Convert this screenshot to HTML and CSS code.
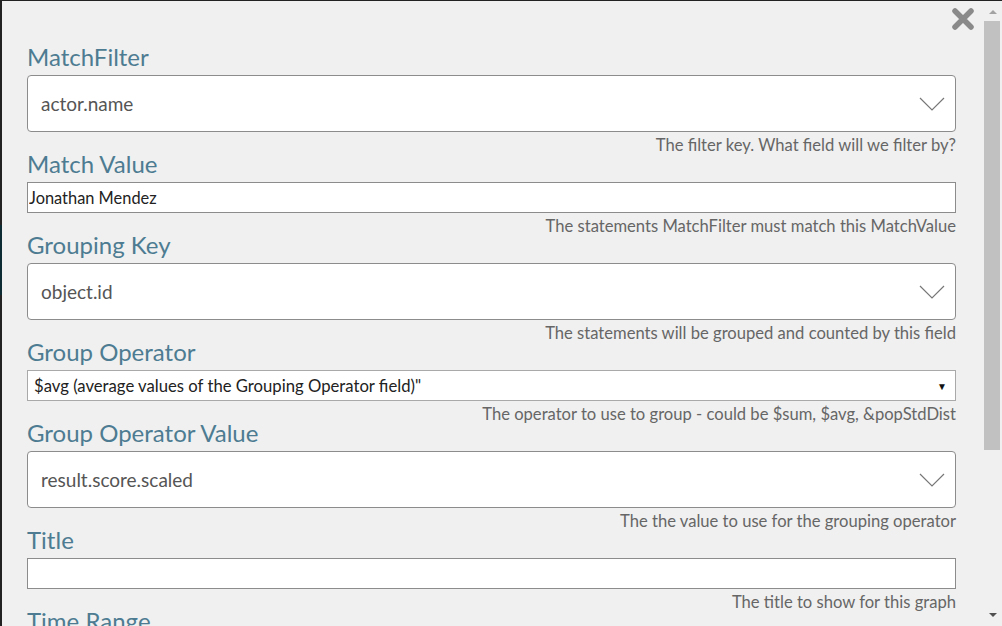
FILE: index.html
```html
<!DOCTYPE html>
<html lang="en">
<head>
    <meta charset="UTF-8" />
    <title>Graph settings</title>
    <link rel="stylesheet" href="styles.css">
</head>
<body>

    <div class="dialog">
        <div class="dialog-body">
            <button class="close-btn" title="Close">
                <svg width="22" height="22" viewBox="0 0 22 22">
                    <path d="M3 3 L19 19 M19 3 L3 19" stroke="#8a8a8a" stroke-width="5.5" stroke-linecap="round" />
                </svg>
            </button>

            <div class="field">
                <label>MatchFilter</label>
                <div class="combo">
                    <span>actor.name</span>
                    <svg class="chevron" width="26" height="14" viewBox="0 0 26 14"><path d="M1 1 L13 13 L25 1" fill="none" stroke="#777" stroke-width="1.2" /></svg>
                </div>
                <p class="help">The filter key. What field will we filter by?</p>
            </div>

            <div class="field">
                <label>Match Value</label>
                <input class="text-input" type="text" value="Jonathan Mendez">
                <p class="help">The statements MatchFilter must match this MatchValue</p>
            </div>

            <div class="field">
                <label>Grouping Key</label>
                <div class="combo">
                    <span>object.id</span>
                    <svg class="chevron" width="26" height="14" viewBox="0 0 26 14"><path d="M1 1 L13 13 L25 1" fill="none" stroke="#777" stroke-width="1.2" /></svg>
                </div>
                <p class="help">The statements will be grouped and counted by this field</p>
            </div>

            <div class="field">
                <label>Group Operator</label>
                <div class="native-select">
                    <span>$avg (average values of the Grouping Operator field)"</span>
                    <span class="arrow">&#9660;</span>
                </div>
                <p class="help">The operator to use to group - could be $sum, $avg, &amp;popStdDist</p>
            </div>

            <div class="field">
                <label>Group Operator Value</label>
                <div class="combo">
                    <span>result.score.scaled</span>
                    <svg class="chevron" width="26" height="14" viewBox="0 0 26 14"><path d="M1 1 L13 13 L25 1" fill="none" stroke="#777" stroke-width="1.2" /></svg>
                </div>
                <p class="help">The the value to use for the grouping operator</p>
            </div>

            <div class="field">
                <label>Title</label>
                <input class="text-input" type="text" value="">
                <p class="help">The title to show for this graph</p>
            </div>

            <div class="field">
                <label>Time Range</label>
            </div>
        </div>

        <div class="scrollbar">
            <span class="scroll-up"></span>
            <div class="scroll-track">
                <div class="scroll-thumb"></div>
            </div>
            <span class="scroll-down"></span>
        </div>
    </div>

</body>
</html>
```

FILE: styles.css
```css
* {
    box-sizing: border-box;
    margin: 0;
    padding: 0;
}

body {
    font-family: Lato, 'Open Sans', sans-serif;
    background: linear-gradient(to bottom, #222 225px, #0d2b32 225px, #0d2b32 295px, #222 295px);
    height: 626px;
    overflow: hidden;
}

.dialog {
    display: flex;
    margin: 1px 0 0 2px;
    height: 625px;
    background-color: #f0f0f0;
}

.dialog-body {
    position: relative;
    flex: 1;
    overflow: hidden;
    padding: 46px 27px 0 25px;
}

.close-btn {
    position: absolute;
    top: 7px;
    right: 9px;
    border: none;
    background: none;
    cursor: pointer;
    line-height: 0;
}

.field label {
    display: block;
    font-size: 24px;
    line-height: 20px;
    color: #4d7c92;
    margin-bottom: 8px;
}

.combo {
    display: flex;
    justify-content: space-between;
    align-items: center;
    height: 57px;
    padding: 0 10px 0 13px;
    background: #fff;
    border: 1px solid #8c8c8c;
    border-radius: 4px;
    font-size: 19px;
    color: #555;
}

    .combo .chevron {
        margin-top: 1px;
    }

.text-input {
    display: block;
    width: 100%;
    height: 31px;
    padding: 0 1px;
    border: 1px solid #8c8c8c;
    background: #fff;
    font-family: inherit;
    font-size: 16.4px;
    color: #222;
    outline: none;
}

.native-select {
    display: flex;
    justify-content: space-between;
    align-items: center;
    height: 31px;
    padding: 0 8px 0 6px;
    background: #fff;
    border: 1px solid #a9a9a9;
    font-size: 16.7px;
    color: #222;
}

    .native-select .arrow {
        font-size: 10px;
        color: #111;
    }

.help {
    margin: 5px 0 1px;
    text-align: right;
    font-size: 16.6px;
    line-height: 16px;
    color: #666;
}

.scrollbar {
    display: flex;
    flex-direction: column;
    align-items: center;
    width: 19px;
    background-color: #f0f0f0;
}

.scroll-up,
.scroll-down {
    width: 0;
    height: 0;
    border-left: 4px solid transparent;
    border-right: 4px solid transparent;
}

.scroll-up {
    margin: 9px 0 7px;
    border-bottom: 4px solid #a3a3a3;
}

.scroll-down {
    margin: 6px 0 9px;
    border-top: 4px solid #505050;
}

.scroll-track {
    flex: 1;
    width: 100%;
    padding: 0 2px 0 1px;
}

.scroll-thumb {
    height: 429px;
    background-color: #c1c1c1;
}
```
